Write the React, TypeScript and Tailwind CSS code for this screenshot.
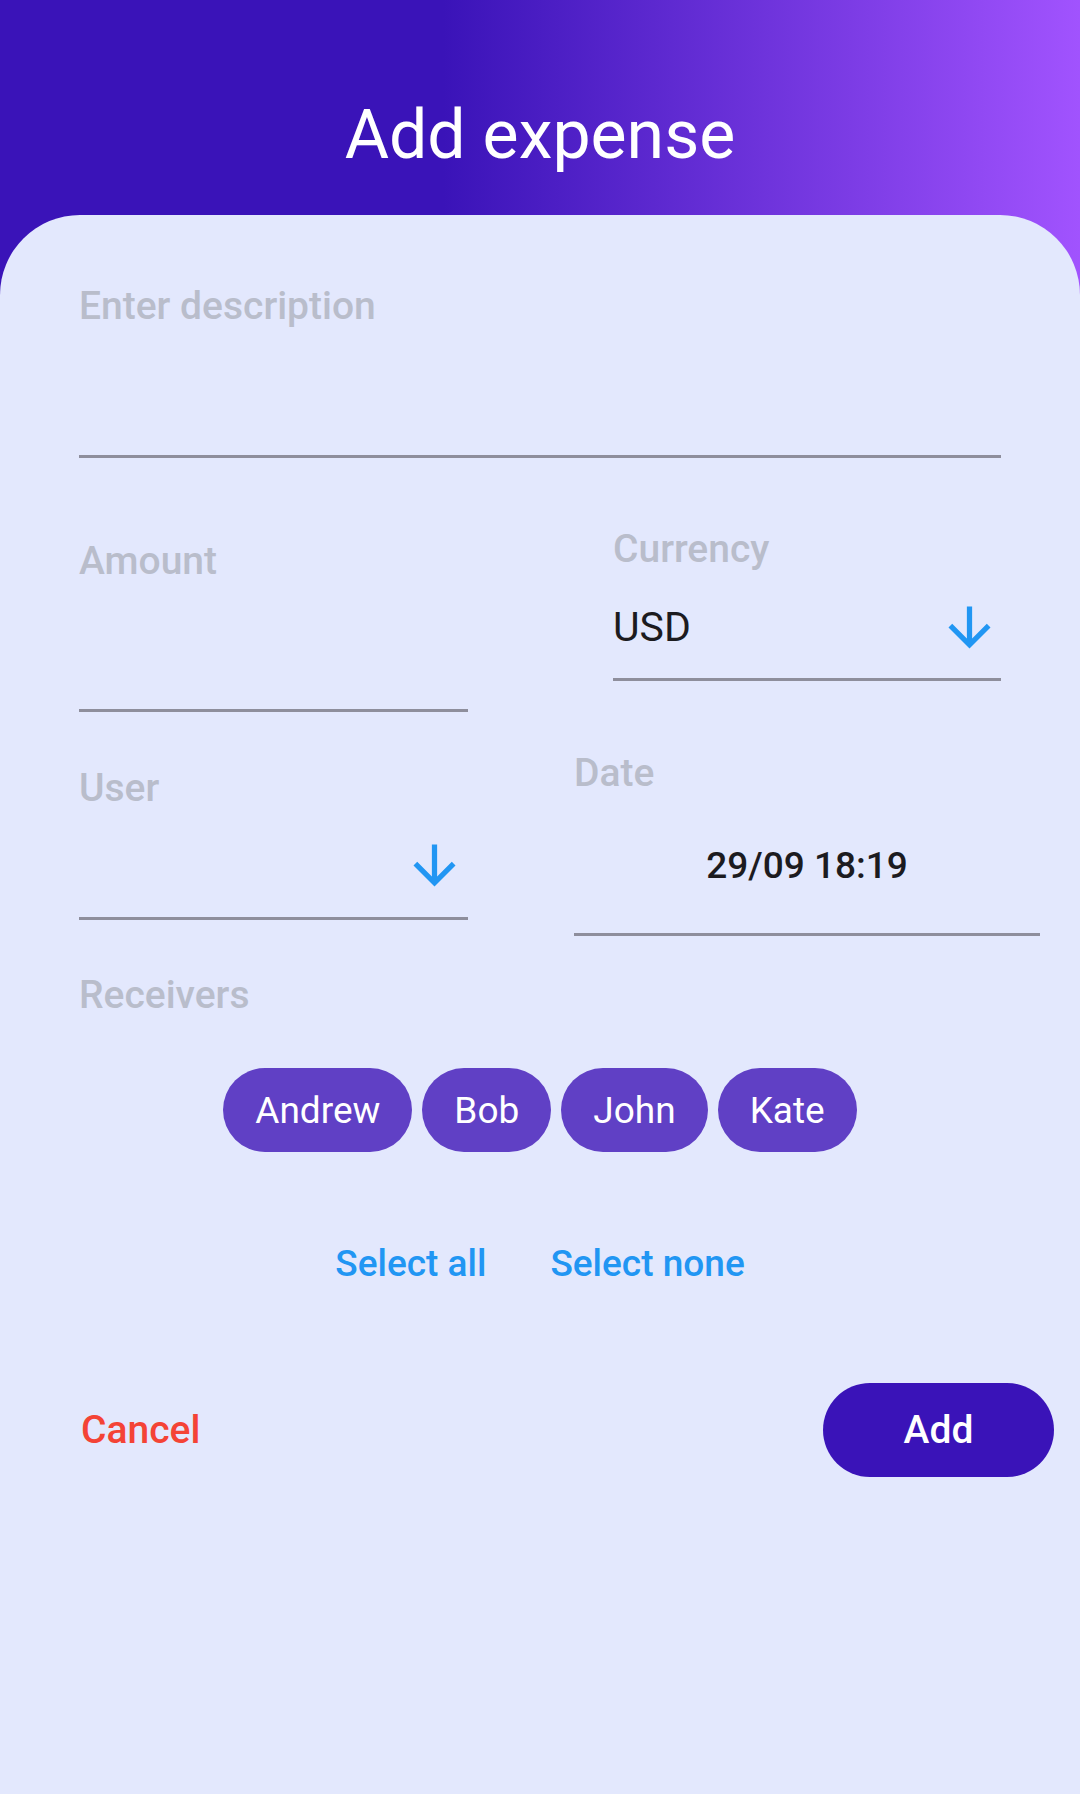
import React from "react";

const font = { fontFamily: "Roboto, 'Noto Sans', sans-serif" };

function ArrowDown() {
  return (
    <svg width="63" height="63" viewBox="0 0 24 24" className="shrink-0">
      <path
        fill="#2196f3"
        d="M20 12l-1.41-1.41L13 16.17V4h-2v12.17l-5.58-5.59L4 12l8 8 8-8z"
      />
    </svg>
  );
}

export default function App() {
  const chips = ["Andrew", "Bob", "John", "Kate"];
  return (
    <div
      style={font}
      className="w-[1080px] h-[1794px] flex flex-col overflow-hidden bg-[linear-gradient(90deg,#3a13b8_0%,#3a13b8_41%,#a153fe_100%)]"
    >
      <div className="h-[215px] shrink-0 pt-[101px] flex justify-center">
        <div className="text-[68px] leading-none text-white font-normal">Add expense</div>
      </div>
      <div className="flex-1 bg-[#e3e8fd] rounded-t-[80px] pl-[79px] pr-[79px] pt-[72px] flex flex-col">
        {/* description */}
        <div className="flex flex-col">
          <div className="text-[39px] leading-none font-medium text-[#b9bdcb]">Enter description</div>
          <div className="h-[132px] border-b-[3px] border-[#8e8e9c]" />
        </div>

        {/* amount / currency */}
        <div className="flex justify-between items-start">
          <div className="w-[389px] pt-[84px] flex flex-col">
            <div className="text-[39px] leading-none font-medium text-[#b9bdcb]">Amount</div>
            <div className="h-[131px] border-b-[3px] border-[#8e8e9c]" />
          </div>
          <div className="w-[388px] pt-[72px] flex flex-col">
            <div className="text-[39px] leading-none font-medium text-[#b9bdcb]">Currency</div>
            <div className="h-[112px] border-b-[3px] border-[#8e8e9c] flex justify-between items-start">
              <div className="mt-[38px] text-[41px] leading-none text-[#1c1b1f]">USD</div>
              <div className="mt-[27px]">
                <ArrowDown />
              </div>
            </div>
          </div>
        </div>

        {/* user / date */}
        <div className="flex items-start gap-[106px]">
          <div className="w-[389px] shrink-0 pt-[57px] flex flex-col">
            <div className="text-[39px] leading-none font-medium text-[#b9bdcb]">User</div>
            <div className="h-[112px] border-b-[3px] border-[#8e8e9c] flex justify-end items-start">
              <div className="mt-[26px] mr-[2px]">
                <ArrowDown />
              </div>
            </div>
          </div>
          <div className="w-[466px] shrink-0 pt-[42px] flex flex-col">
            <div className="text-[39px] leading-none font-medium text-[#b9bdcb]">Date</div>
            <div className="h-[143px] border-b-[3px] border-[#8e8e9c] flex justify-center items-start">
              <div className="mt-[54px] text-[37px] leading-none font-medium text-[#1c1b1f]">29/09 18:19</div>
            </div>
          </div>
        </div>

        {/* receivers */}
        <div className="mt-[40px] text-[39px] leading-none font-medium text-[#b9bdcb]">Receivers</div>
        <div className="mt-[53px] flex justify-center gap-[10px]">
          {chips.map((c) => (
            <div
              key={c}
              className="h-[84px] px-[32px] rounded-full bg-[#6040c5] text-white text-[37px] leading-none flex items-center"
            >
              {c}
            </div>
          ))}
        </div>

        <div className="mt-[93px] flex justify-center gap-[64px] text-[37px] leading-none font-medium text-[#2196f3]">
          <span>Select all</span>
          <span>Select none</span>
        </div>

        <div className="mt-[101px] flex justify-between items-center -mr-[53px]">
          <span className="pl-[2px] text-[39px] leading-none font-medium text-[#f44336]">Cancel</span>
          <button className="w-[231px] h-[94px] rounded-full bg-[#3a13b8] text-white text-[39px] leading-none font-medium flex items-center justify-center">
            Add
          </button>
        </div>
      </div>
    </div>
  );
}
